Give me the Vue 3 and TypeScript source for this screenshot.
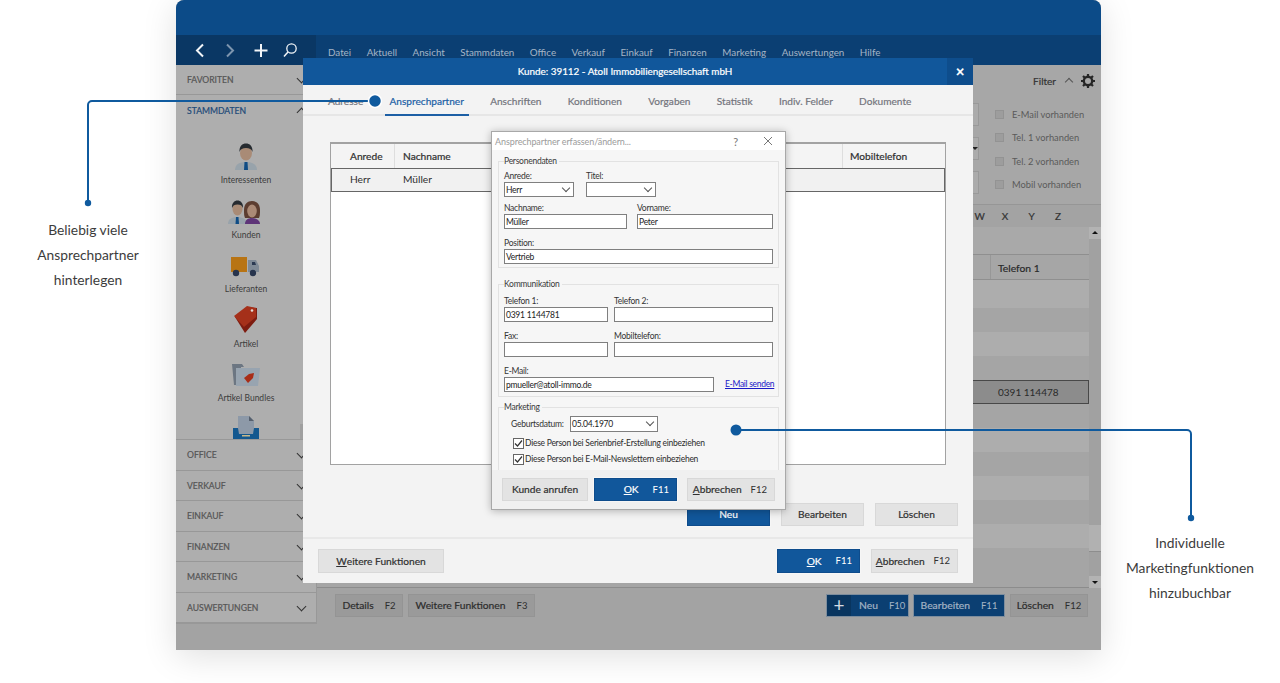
<script setup lang="ts">
// Kundenverwaltung mit offenem Kundendialog und Ansprechpartner-Fenster
const menu = ["Datei", "Aktuell", "Ansicht", "Stammdaten", "Office", "Verkauf", "Einkauf", "Finanzen", "Marketing", "Auswertungen", "Hilfe"];
const lowerNav = ["OFFICE", "VERKAUF", "EINKAUF", "FINANZEN", "MARKETING", "AUSWERTUNGEN"];
const filters = ["E-Mail vorhanden", "Tel. 1 vorhanden", "Tel. 2 vorhanden", "Mobil vorhanden"];
const tabs = ["Adresse", "Ansprechpartner", "Anschriften", "Konditionen", "Vorgaben", "Statistik", "Indiv. Felder", "Dokumente"];
const letters = ["W", "X", "Y", "Z"];
const rows = Array.from({ length: 12 }, (_, i) => i);
</script>

<template>
  <div class="stage">
    <div class="window">
      <div class="top-strip"></div>
      <div class="nav-row">
        <div class="nav-tools">
          <svg width="140" height="30" viewBox="0 0 140 30" fill="none" stroke="#f2f5f8" stroke-width="2">
            <path d="M27 9.5l-6 6 6 6" />
            <path d="M51 9.5l6 6-6 6" stroke="#7d95ae" />
            <path d="M85 9v13M78.500 15.500h13" />
            <circle cx="115.500" cy="13.500" r="4.700" stroke-width="1.300" />
            <path d="M112 17l-4 4.500" stroke-width="1.500" />
          </svg>
        </div>
        <div class="menu">
          <span v-for="m in menu" :key="m">{{ m }}</span>
        </div>
      </div>

      <div class="body">
        <aside class="sidebar">
          <div class="nav-head">FAVORITEN<i class="chev"></i></div>
          <div class="nav-head active">STAMMDATEN<i class="chev up"></i></div>
          <div class="nav-icons">
            <div class="nav-item">
              <svg width="32" height="29" viewBox="0 0 32 29">
                <path d="M5 28c0-6 5-8 11-8s11 2 11 8z" fill="#98a3ab" />
                <path d="M14.500 20h3l.5 8h-4z" fill="#0f4c85" />
                <ellipse cx="16" cy="11" rx="6" ry="7.500" fill="#a98b76" />
                <path d="M9.500 10c-.5-6 3-8.500 6.500-8.500s7 2.500 6.500 8.500c-1-3-3-4-6.500-4s-5.500 1-6.500 4z" fill="#262b30" />
              </svg>
              <span>Interessenten</span>
            </div>
            <div class="nav-item">
              <svg width="36" height="29" viewBox="0 0 36 29">
                <path d="M0 27c0-5 4-7 9-7s10 2 10 7z" fill="#98a3ab" />
                <path d="M8 20h2.500l.5 7H7.500z" fill="#0f4c85" />
                <ellipse cx="9.500" cy="12" rx="5" ry="6.500" fill="#a98b76" />
                <path d="M4 11c-.5-5 2.500-7.500 5.500-7.500S15.500 6 15 11c-1-2.500-2.500-3.500-5.500-3.500S5 8.500 4 11z" fill="#262b30" />
                <path d="M17 21c-1-2-1-5-1-8 0-6 3.500-9 8-9s8 3 8 9c0 3 0 6-1 8z" fill="#5c3d30" />
                <path d="M17 27c0-4 3-6 7-6s8 2 8 6z" fill="#5e3478" />
                <ellipse cx="24" cy="14" rx="4.800" ry="6.500" fill="#ab8a76" />
              </svg>
              <span>Kunden</span>
            </div>
            <div class="nav-item">
              <svg width="30" height="29" viewBox="0 -4 30 29">
                <rect x="0" y="2" width="16" height="15" fill="#b87414" />
                <path d="M17 5h8l3 6v6H17z" fill="#7f8a96" />
                <path d="M21 7h3l1 3h-4z" fill="#2b3a52" />
                <circle cx="5" cy="18" r="3.200" fill="#27344d" />
                <circle cx="22" cy="18" r="3.200" fill="#27344d" />
              </svg>
              <span>Lieferanten</span>
            </div>
            <div class="nav-item">
              <svg width="26" height="29" viewBox="0 0 26 29">
                <path d="M2 11L15 1l9 1v11L12 27z" fill="#7e1c10" />
                <path d="M1 10L14 0l9 2v9L11 21z" fill="#a5301a" />
                <circle cx="19" cy="4.500" r="1.300" fill="#e6dcd8" />
              </svg>
              <span>Artikel</span>
            </div>
            <div class="nav-item">
              <svg width="30" height="29" viewBox="0 -4 30 29">
                <path d="M1 0h10l2 3h-3v18H3z" fill="#6c7682" />
                <path d="M5 4h24l-2 18H5z" fill="#98a4b0" />
                <path d="M13 14l5-4 5-1-1 5-5 5z" fill="#a82d18" />
              </svg>
              <span>Artikel Bundles</span>
            </div>
            <div class="nav-item">
              <svg width="30" height="29" viewBox="0 0 30 29">
                <path d="M7 1h11l5 5v13H7z" fill="#8d99a8" />
                <path d="M18 1l5 5h-5z" fill="#555f6d" />
                <path d="M2 13h5l1 6h14l1-6h5v11H2z" fill="#14588f" />
                <rect x="11" y="20" width="8" height="1.500" fill="#c9b888" />
              </svg>
            </div>
            <i class="side-scroll"></i>
          </div>
          <div v-for="n in lowerNav" :key="n" class="nav-head lower">{{ n }}<i class="chev"></i></div>
        </aside>

        <main class="main">
          <div class="filter-area">
            <div class="filter-head">
              <span>Filter</span>
              <i class="chev-thin"></i>
              <svg class="gear" width="14" height="14" viewBox="0 0 14 14">
                <circle cx="7" cy="7" r="4.200" fill="none" stroke="#262626" stroke-width="2.400" />
                <path d="M7 0v2.500M7 11.500V14M0 7h2.500M11.500 7H14M2 2l1.800 1.800M10.200 10.200L12 12M2 12l1.800-1.800M10.200 3.800L12 2" stroke="#262626" stroke-width="2.200" />
              </svg>
            </div>
            <div class="filter-grid">
              <div class="filter-inputs">
                <span class="stub"></span>
                <span class="stub"><b></b></span>
                <span class="stub"></span>
              </div>
              <ul class="filter-checks">
                <li v-for="f in filters" :key="f"><i></i>{{ f }}</li>
              </ul>
            </div>
          </div>

          <div class="letters">
            <span v-for="l in letters" :key="l">{{ l }}</span>
          </div>

          <div class="grid-wrap">
            <div class="grid">
              <div class="grid-band"></div>
              <div class="grid-head"><span class="tel">Telefon 1</span></div>
              <div class="grid-first"></div>
              <div class="grid-rows">
                <div v-for="r in rows" :key="r" class="grid-row" :class="{ odd: r % 2 === 1, sel: r === 4 }">
                  <span v-if="r === 4" class="tel">0391 114478</span>
                </div>
              </div>
              <div class="h-scroll"></div>
            </div>
            <div class="v-scroll">
              <i class="sb-btn"><b class="up"></b></i>
              <i class="sb-thumb"></i>
              <i class="sb-btn"><b></b></i>
            </div>
          </div>

          <div class="main-foot">
            <button class="dim details"><span>Details</span><small>F2</small></button>
            <button class="dim more"><span>Weitere Funktionen</span><small>F3</small></button>
            <span class="spacer"></span>
            <button class="dim blue neu"><em>+</em><span>Neu</span><small>F10</small></button>
            <button class="dim blue"><span>Bearbeiten</span><small>F11</small></button>
            <button class="dim last"><span>Löschen</span><small>F12</small></button>
          </div>
        </main>
      </div>

      <!-- Kundendialog -->
      <section class="modal">
        <header class="modal-title">
          <span>Kunde: 39112 - Atoll Immobiliengesellschaft mbH</span>
          <i class="modal-x">×</i>
        </header>
        <nav class="tabs">
          <span v-for="t in tabs" :key="t" class="tab" :class="{ on: t === 'Ansprechpartner' }">{{ t }}</span>
        </nav>
        <div class="modal-body">
          <div class="contacts">
            <div class="contacts-head">
              <span class="c1">Anrede</span>
              <span class="c2">Nachname</span>
              <span class="c3">Mobiltelefon</span>
            </div>
            <div class="contacts-row">
              <span class="c1">Herr</span>
              <span class="c2">Müller</span>
            </div>
          </div>
          <div class="contact-actions">
            <button class="mbtn primary">Neu</button>
            <button class="mbtn">Bearbeiten</button>
            <button class="mbtn">Löschen</button>
          </div>
        </div>
        <footer class="modal-foot">
          <button class="mbtn wide"><u>W</u>eitere Funktionen</button>
          <span class="spacer"></span>
          <button class="mbtn primary key"><span><u>O</u>K</span><small>F11</small></button>
          <button class="mbtn key"><span><u>A</u>bbrechen</span><small>F12</small></button>
        </footer>

        <!-- Ansprechpartner erfassen -->
        <div class="dialog">
          <div class="dlg-title">
            <span>Ansprechpartner erfassen/ändern...</span>
            <i class="dlg-help">?</i>
            <svg width="10" height="10" viewBox="0 0 10 10" stroke="#777" fill="none"><path d="M1 1l8 8M9 1L1 9" /></svg>
          </div>
          <div class="dlg-body">
            <fieldset class="group g-person">
              <legend>Personendaten</legend>
              <div class="line">
                <label style="width:70px">Anrede:<span class="field sel">Herr<i class="dd"></i></span></label>
                <label style="width:70px">Titel:<span class="field sel"><i class="dd"></i></span></label>
              </div>
              <div class="line wide-gap">
                <label style="width:123px">Nachname:<span class="field">Müller</span></label>
                <label style="width:136px">Vorname:<span class="field">Peter</span></label>
              </div>
              <div class="line">
                <label style="width:269px">Position:<span class="field">Vertrieb</span></label>
              </div>
            </fieldset>
            <fieldset class="group g-comm">
              <legend>Kommunikation</legend>
              <div class="line tight">
                <label style="width:104px">Telefon 1:<span class="field">0391 1144781</span></label>
                <label style="width:159px">Telefon 2:<span class="field"></span></label>
              </div>
              <div class="line tight">
                <label style="width:104px">Fax:<span class="field"></span></label>
                <label style="width:159px">Mobiltelefon:<span class="field"></span></label>
              </div>
              <div class="line tight mail">
                <label style="width:210px">E-Mail:<span class="field">pmueller@atoll-immo.de</span></label>
                <a class="mail-link">E-Mail senden</a>
              </div>
            </fieldset>
            <fieldset class="group g-market">
              <legend>Marketing</legend>
              <div class="birth">
                <span class="birth-label">Geburtsdatum:</span>
                <span class="field sel date">05.04.1970<i class="dd"></i></span>
              </div>
              <div class="check">
                <svg width="11" height="11" viewBox="0 0 11 11"><rect x=".5" y=".5" width="10" height="10" fill="#fff" stroke="#666" /><path d="M2 5.500l2.500 2.500L9 2.500" fill="none" stroke="#333" stroke-width="1.200" /></svg>
                Diese Person bei Serienbrief-Erstellung einbeziehen
              </div>
              <div class="check">
                <svg width="11" height="11" viewBox="0 0 11 11"><rect x=".5" y=".5" width="10" height="10" fill="#fff" stroke="#666" /><path d="M2 5.500l2.500 2.500L9 2.500" fill="none" stroke="#333" stroke-width="1.200" /></svg>
                Diese Person bei E-Mail-Newslettern einbeziehen
              </div>
            </fieldset>
          </div>
          <div class="dlg-foot">
            <button class="mbtn call">Kunde anrufen</button>
            <button class="mbtn primary key ok"><span><u>O</u>K</span><small>F11</small></button>
            <button class="mbtn key cancel"><span><u>A</u>bbrechen</span><small>F12</small></button>
          </div>
        </div>
      </section>
    </div>

    <!-- Hinweise -->
    <svg class="leaders" width="1280" height="683" viewBox="0 0 1280 683" fill="none">
      <path d="M375 101H92a4 4 0 0 0-4 4v98" stroke="#0f5a9e" stroke-width="2" />
      <circle cx="375" cy="101" r="6.500" fill="#0f5a9e" stroke="#fff" stroke-width="1.500" />
      <circle cx="88" cy="203" r="3.200" fill="#0f5a9e" />
      <path d="M736 430H1187a4 4 0 0 1 4 4v84" stroke="#0f5a9e" stroke-width="2" />
      <circle cx="736" cy="430" r="5.500" fill="#0f5a9e" />
      <circle cx="1191" cy="518" r="3.200" fill="#0f5a9e" />
    </svg>
    <p class="note left">Beliebig viele<br />Ansprechpartner<br />hinterlegen</p>
    <p class="note right">Individuelle<br />Marketingfunktionen<br />hinzubuchbar</p>
  </div>
</template>

<style>
html,
body {
  margin: 0;
  background: #fff;
}
</style>

<style scoped>
* {
  box-sizing: border-box;
}

.stage {
  position: relative;
  width: 1280px;
  height: 683px;
  overflow: hidden;
  background: #fff;
  font-family: Lato, "Liberation Sans", sans-serif;
  color: #333;
}

/* ===== Hauptfenster (abgedunkelt) ===== */
.window {
  position: relative;
  display: flex;
  flex-direction: column;
  width: 925px;
  height: 650px;
  margin-left: 176px;
  border-radius: 8px 8px 0 0;
  background: #a3a3a3;
  box-shadow: 0 6px 34px rgba(0, 0, 0, 0.13);
}

.top-strip {
  height: 35px;
  flex-shrink: 0;
  border-radius: 8px 8px 0 0;
  background: #0c4b88;
}

.nav-row {
  display: flex;
  height: 30px;
  flex-shrink: 0;
  background: #0b3f73;
}

.nav-tools {
  width: 140px;
  background: #0a3764;
}

.nav-tools svg {
  display: block;
}

.menu {
  display: flex;
  gap: 15.500px;
  padding: 10px 0 0 12px;
  font-size: 9.800px;
  line-height: 14px;
  color: #a5b5c6;
}

.body {
  display: flex;
  flex: 1;
  min-height: 0;
}

.sidebar {
  display: flex;
  flex-direction: column;
  width: 141px;
  height: 559px;
  flex-shrink: 0;
  background: #aeaeae;
  border-right: 1px solid #989898;
  border-bottom: 1px solid #989898;
}

.nav-head {
  position: relative;
  display: flex;
  align-items: center;
  height: 30px;
  flex-shrink: 0;
  padding: 1px 0 0 11px;
  font-size: 8.600px;
  -webkit-text-stroke: 0.2px;
  color: #555;
  border-bottom: 1px solid #989898;
}

.nav-head.lower {
  height: 30.500px;
}

.nav-head.active {
  color: #1d4a78;
  border-bottom: 0;
}

.chev {
  position: absolute;
  right: 11px;
  top: 10px;
  width: 7px;
  height: 7px;
  border: solid #333;
  border-width: 0 1.500px 1.500px 0;
  transform: rotate(45deg);
}

.chev.up {
  top: 14px;
  transform: rotate(225deg);
}

.nav-icons {
  position: relative;
  display: flex;
  flex-direction: column;
  align-items: center;
  gap: 10px;
  height: 315px;
  flex-shrink: 0;
  padding: 17px 0 0;
  overflow: hidden;
  border-bottom: 1px solid #989898;
}

.nav-item {
  display: flex;
  flex-direction: column;
  align-items: center;
  height: 44.500px;
  flex-shrink: 0;
  font-size: 8.500px;
  line-height: 13px;
  color: #3c3c3c;
}

.nav-item svg {
  display: block;
  flex-shrink: 0;
  margin-bottom: 3px;
}

.side-scroll {
  position: absolute;
  right: 12px;
  bottom: 0;
  width: 4px;
  height: 15px;
  background: #9f9f9f;
}

.main {
  display: flex;
  flex-direction: column;
  flex: 1;
  min-width: 0;
}

.filter-area {
  height: 140px;
  flex-shrink: 0;
  border-bottom: 1px solid #969696;
  background: #a7a7a7;
}

.filter-head {
  display: flex;
  align-items: center;
  justify-content: flex-end;
  gap: 6px;
  height: 31px;
  padding-right: 6px;
  font-size: 10px;
  -webkit-text-stroke: 0.2px;
  color: #333;
}

.chev-thin {
  width: 6px;
  height: 6px;
  margin: 3px 4px 0;
  border: solid #555;
  border-width: 1px 0 0 1px;
  transform: rotate(45deg);
}

.gear {
  display: block;
  margin-left: -1px;
}

.filter-grid {
  display: flex;
  justify-content: flex-end;
  padding-top: 7px;
}

.filter-inputs {
  display: flex;
  flex-direction: column;
  gap: 11px;
  width: 7px;
  margin-right: 17px;
}

.stub {
  position: relative;
  display: block;
  height: 23px;
  background: #ababab;
  border: solid #999;
  border-width: 1px 1px 1px 0;
}

.stub b {
  position: absolute;
  left: 0;
  top: 9px;
  border: 3px solid transparent;
  border-top-color: #222;
}

.filter-checks {
  display: flex;
  flex-direction: column;
  gap: 8px;
  width: 105px;
  margin: 4px 0 0;
  padding: 0;
  list-style: none;
  font-size: 9.300px;
  line-height: 15.300px;
  color: #5a5a5a;
}

.filter-checks li {
  display: flex;
  align-items: center;
  gap: 9px;
  white-space: nowrap;
}

.filter-checks i {
  width: 7px;
  height: 7px;
  background: #9d9d9d;
  box-shadow: 0 0 0 1px #939393;
}

.letters {
  display: flex;
  justify-content: flex-end;
  gap: 18.500px;
  height: 22px;
  flex-shrink: 0;
  padding: 4px 39px 0 0;
  font-size: 10px;
  -webkit-text-stroke: 0.2px;
  line-height: 14px;
  color: #333;
}

.letters span {
  width: 8px;
  text-align: center;
}

.grid-wrap {
  display: flex;
  height: 361px;
  flex-shrink: 0;
  background: #adadad;
}

.grid {
  display: flex;
  flex-direction: column;
  flex: 1;
  min-width: 0;
}

.grid-band {
  height: 28px;
  flex-shrink: 0;
  background: #a9a9a9;
  border-bottom: 1px solid #8f8f8f;
}

.grid-head {
  position: relative;
  height: 25px;
  flex-shrink: 0;
  background: #a6a6a6;
  border-bottom: 1px solid #8f8f8f;
}

.tel {
  position: absolute;
  left: 681px;
  top: 6px;
  font-size: 10.300px;
  -webkit-text-stroke: 0.2px;
  line-height: 14px;
  color: #2a2a2a;
}

.grid-head::after {
  content: "";
  position: absolute;
  left: 673px;
  top: 0;
  bottom: 0;
  width: 1px;
  background: #979797;
}

.grid-first {
  height: 4px;
  flex-shrink: 0;
  background: #adadad;
}

.grid-rows {
  flex: 1;
  min-height: 0;
  overflow: hidden;
}

.grid-row {
  position: relative;
  height: 24px;
  background: #adadad;
}

.grid-row.odd {
  background: #a5a5a5;
}

.grid-row.sel {
  background: #8c8c8c;
  border: 1px solid #484848;
}

.grid-row.sel .tel {
  left: 680px;
  top: 4px;
  font-size: 10px;
  -webkit-text-stroke: 0;
}

.h-scroll {
  height: 18px;
  flex-shrink: 0;
  background: #a5a5a5;
  border-bottom: 1px solid #8c8c8c;
}

.v-scroll {
  display: flex;
  flex-direction: column;
  width: 12px;
  flex-shrink: 0;
  background: #a1a1a1;
}

.sb-btn {
  position: relative;
  height: 12px;
  background: #b3b3b3;
}

.sb-btn b {
  position: absolute;
  left: 3px;
  top: 5px;
  border: 3px solid transparent;
  border-top-color: #111;
}

.sb-btn b.up {
  top: 1px;
  border-top-color: transparent;
  border-bottom-color: #111;
}

.sb-thumb {
  height: 27px;
  margin: auto 0 24px;
  background: #b1b1b1;
  border-bottom: 1px solid #8d8d8d;
}

.main-foot {
  display: flex;
  gap: 4px;
  padding: 6px 13px 0 18px;
}

.spacer {
  flex: 1;
}

.dim {
  display: flex;
  align-items: center;
  justify-content: center;
  gap: 11px;
  height: 23px;
  padding: 0 0 1px;
  border: 0;
  font: 400 10.300px Lato, "Liberation Sans", sans-serif;
  -webkit-text-stroke: 0.2px;
  white-space: nowrap;
  color: #2d2d2d;
  background: #9a9a9a;
  box-shadow: inset 0 0 0 1px #949494;
}

.dim small {
  font-size: 9.500px;
  -webkit-text-stroke: 0;
}

.dim.details {
  width: 68px;
  margin-right: 1px;
}

.dim.more {
  width: 127px;
}

.dim.blue {
  color: #a3b3c4;
  background: #0b3f72;
  box-shadow: inset 0 0 0 1px #7d8d9d;
  width: 92px;
}

.dim.neu {
  position: relative;
  width: 83px;
  justify-content: flex-start;
  padding-left: 33px;
}

.dim.neu em {
  position: absolute;
  left: 1px;
  top: 1px;
  width: 24px;
  height: 21px;
  font: 400 19px/20px Lato, sans-serif;
  -webkit-text-stroke: 0;
  color: #d4dbe3;
  text-align: center;
  background: #09355f;
}

.dim.last {
  width: 78px;
  margin-left: 1px;
}

/* ===== Kundendialog ===== */
.modal {
  position: absolute;
  left: 127px;
  top: 58px;
  display: flex;
  flex-direction: column;
  width: 670px;
  height: 525px;
  background: #f3f3f3;
}

.modal-title {
  position: relative;
  display: flex;
  align-items: center;
  justify-content: center;
  height: 27px;
  flex-shrink: 0;
  padding: 0 26px 1px 0;
  font-size: 9.900px;
  -webkit-text-stroke: 0.2px;
  color: #fff;
  background: #11579b;
}

.modal-x {
  position: absolute;
  right: 0;
  top: 0;
  width: 26px;
  height: 27px;
  font: 700 15px/26px Lato, sans-serif;
  text-align: center;
  background: #0e4d8c;
}

.tabs {
  display: flex;
  gap: 16.300px;
  height: 31px;
  flex-shrink: 0;
  padding-left: 20px;
  border-bottom: 2px solid #e6e6e6;
}

.tab {
  height: 31px;
  padding: 0 5px;
  font-size: 10.100px;
  -webkit-text-stroke: 0.2px;
  line-height: 33px;
  color: #73757d;
}

.tab.on {
  color: #1c5fa5;
  border-bottom: 2px solid #1c5fa5;
}

.modal-body {
  display: flex;
  flex-direction: column;
  flex: 1;
  min-height: 0;
  padding: 26px 15px 0 27px;
}

.contacts {
  width: 616px;
  height: 323px;
  flex-shrink: 0;
  background: #fff;
  border: 1px solid #a2a2a2;
  border-top: 2px solid #a2a2a2;
}

.contacts-head,
.contacts-row {
  position: relative;
  height: 24px;
  font-size: 10.200px;
  line-height: 25px;
  color: #2f2f2f;
}

.contacts-head {
  -webkit-text-stroke: 0.2px;
  background: #f4f4f4;
}

.contacts-head::before,
.contacts-head::after {
  content: "";
  position: absolute;
  top: 0;
  bottom: 0;
  width: 1px;
  background: #dedede;
}

.contacts-head::before {
  left: 63px;
}

.contacts-head::after {
  left: 511px;
}

.contacts-row {
  background: #f1f1f1;
  border: 1.500px solid #666;
  line-height: 21px;
}

.c1,
.c2,
.c3 {
  position: absolute;
  top: 0;
}

.c1 {
  left: 19px;
}

.c2 {
  left: 72px;
}

.contacts-row .c1 {
  left: 18px;
}

.contacts-row .c2 {
  left: 71px;
}

.c3 {
  left: 519px;
}

.contact-actions {
  display: flex;
  justify-content: flex-end;
  gap: 11px;
  padding-top: 38px;
}

.mbtn {
  display: flex;
  align-items: center;
  justify-content: center;
  width: 83px;
  height: 23px;
  padding: 0 0 1px;
  border: 1px solid #d8d8d8;
  font: 400 10.200px Lato, "Liberation Sans", sans-serif;
  -webkit-text-stroke: 0.2px;
  white-space: nowrap;
  color: #303030;
  background: #e3e3e3;
}

.mbtn.primary {
  color: #fff;
  background: #11579b;
  border-color: #0e4c8c;
  box-shadow: 0 0 0 1px #f6f6f6;
}

.mbtn small {
  font-size: 9.500px;
  -webkit-text-stroke: 0;
}

.mbtn.key {
  justify-content: flex-end;
  gap: 9px;
  padding-right: 7px;
}

.mbtn.primary.key {
  gap: 14px;
}

.modal-foot {
  display: flex;
  align-items: center;
  gap: 11px;
  height: 46px;
  flex-shrink: 0;
  padding: 0 15px;
  border-top: 2px solid #e8e8e8;
}

.mbtn.wide {
  width: 126px;
  height: 24px;
}

.modal-foot .mbtn.key {
  height: 24px;
}

.modal-foot .mbtn.key:last-child {
  width: 87px;
}

/* ===== Ansprechpartner-Fenster ===== */
.dialog {
  position: absolute;
  left: 188px;
  top: 73px;
  display: flex;
  flex-direction: column;
  width: 295px;
  height: 379px;
  background: #f6f6f6;
  border: 1px solid #a8a8a8;
  box-shadow: 0 1px 8px rgba(0, 0, 0, 0.28);
}

.dlg-title {
  display: flex;
  align-items: center;
  height: 18px;
  flex-shrink: 0;
  padding: 0 12px 0 3px;
  font-size: 9px;
  letter-spacing: -0.1px;
  color: #9b9b9b;
  background: #fff;
}

.dlg-title span {
  flex: 1;
}

.dlg-help {
  margin-right: 25px;
  font-size: 11px;
  font-style: normal;
  color: #777;
}

.dlg-body {
  flex: 1;
  min-height: 0;
  padding: 6px 6px 0;
  overflow: hidden;
  letter-spacing: -0.25px;
}

.group {
  margin: 0 0 11px;
  padding: 4px 5px 0;
  border: 1px solid #e2e2e2;
  min-width: 0;
}

.group legend {
  padding: 0 2px 0 0;
  font-size: 8.500px;
  line-height: 10px;
  color: #3a3a3a;
}

.g-person {
  height: 112px;
}

.g-person .line:nth-of-type(2) {
  margin-bottom: 8px;
}

.g-comm {
  height: 118px;
  margin-bottom: 5px;
  padding-top: 6px;
}

.g-market {
  height: 80px;
}

.line {
  display: flex;
  gap: 12px;
  margin-bottom: 5px;
}

.line.wide-gap {
  gap: 10px;
}

.line.tight {
  gap: 6px;
  margin-bottom: 8px;
}

.line.mail {
  align-items: flex-end;
  gap: 11px;
  margin-bottom: 0;
}

label {
  display: block;
  flex-shrink: 0;
  font-size: 8.500px;
  line-height: 12px;
  color: #333;
}

.field {
  position: relative;
  display: block;
  height: 15px;
  padding-left: 1px;
  font-size: 8.500px;
  line-height: 14px;
  color: #222;
  background: #fff;
  border: 1px solid #7f7f7f;
}

.dd {
  position: absolute;
  right: 4px;
  top: 2px;
  width: 6px;
  height: 6px;
  border: solid #555;
  border-width: 0 1px 1px 0;
  transform: rotate(45deg);
}

.mail-link {
  margin-bottom: 2px;
  font-size: 8.500px;
  line-height: 11px;
  letter-spacing: -0.3px;
  color: #1a1ac8;
  text-decoration: underline;
  white-space: nowrap;
}

.birth {
  display: flex;
  align-items: center;
  margin-bottom: 3px;
  padding-left: 7px;
  font-size: 8.500px;
}

.birth-label {
  width: 59px;
}

.field.date {
  width: 88px;
  height: 16px;
}

.check {
  display: flex;
  align-items: center;
  gap: 1px;
  height: 16px;
  padding-left: 9px;
  font-size: 8.500px;
  color: #2c2c2c;
  white-space: nowrap;
}

.check svg {
  display: block;
}

.dlg-foot {
  display: flex;
  align-items: center;
  height: 39px;
  flex-shrink: 0;
  padding: 0 10px;
  background: #f0f0f0;
}

.mbtn.call {
  width: 86px;
  margin-right: 6px;
}

.mbtn.ok {
  width: 83px;
  margin-right: 10px;
}

.mbtn.cancel {
  width: 88px;
}

/* ===== Hinweise ===== */
.leaders {
  position: absolute;
  left: 0;
  top: 0;
  pointer-events: none;
}

.note {
  position: absolute;
  margin: 0;
  width: 160px;
  font-size: 13.800px;
  line-height: 25px;
  text-align: center;
  color: #3c3c3c;
}

.note.left {
  left: 8px;
  top: 217px;
}

.note.right {
  left: 1110px;
  top: 530px;
}
</style>
